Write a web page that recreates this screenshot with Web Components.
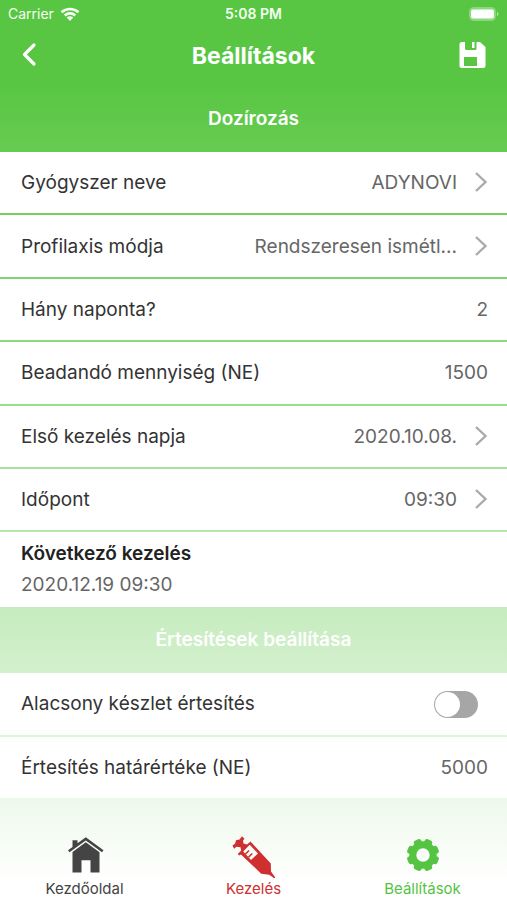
<!DOCTYPE html>
<html lang="hu">
<head>
<meta charset="utf-8">
<meta name="viewport" content="width=device-width, initial-scale=1">
<title>Beállítások</title>
<style>
body {
  margin: 0;
  font-family: Inter, "Noto Sans", sans-serif;
  font-size: 19px;
  line-height: 24px;
  color: #333;
}
</style>
</head>
<body>
<settings-screen></settings-screen>

<template id="status-bar">
  <style>
    :host { display: grid; grid-template-columns: 1fr auto 1fr; align-items: center; height: 28px; padding: 0 8px; color: #f4fff2; font-size: 14px; line-height: 20px; }
    .carrier { display: flex; align-items: center; gap: 6px; }
    .time { font-weight: 600; }
    .battery { justify-self: end; }
    svg { display: block; }
  </style>
  <span class="carrier">Carrier
    <svg width="20" height="14" viewBox="0 0 20 14" fill="none" stroke="currentColor" stroke-width="2.6">
      <path d="M1.5 5.3C6.2.8 13.8.8 18.5 5.3M4.700 8.500C7.700 5.700 12.300 5.700 15.300 8.500"/>
      <path d="M6.700 10.600Q10 7.700 13.300 10.600L10 14Z" fill="currentColor" stroke="none"/>
    </svg>
  </span>
  <span class="time">5:08 PM</span>
  <svg class="battery" width="30" height="14" viewBox="0 0 30 14">
    <rect x=".5" y=".5" width="26" height="13" rx="4" fill="#8bd97c" stroke="#8bd97c"/>
    <rect x="2" y="2.500" width="23" height="9" rx="2" fill="#fff"/>
    <path d="M28 4.500q3 2.500 0 5z" fill="#a8e49c"/>
  </svg>
</template>

<template id="title-bar">
  <style>
    :host { display: grid; grid-template-columns: 1fr auto 1fr; align-items: center; height: 56px; padding: 0 16px 2px; color: #fff; }
    h1 { margin: 0; font-size: 23px; line-height: 28px; font-weight: 700; }
    button { display: flex; padding: 4px; border: 0; background: none; color: inherit; cursor: pointer; }
    .save { justify-self: end; }
  </style>
  <button class="back" aria-label="Vissza">
    <svg width="20" height="28" viewBox="0 0 20 28" fill="none" stroke="currentColor" stroke-width="3.200" stroke-linecap="round" stroke-linejoin="round"><path d="M14 3 4.500 12.500 14 22"/></svg>
  </button>
  <h1><slot></slot></h1>
  <button class="save" aria-label="Mentés">
    <svg width="28" height="28" viewBox="0 0 28 28" fill="currentColor" fill-rule="evenodd"><path d="M3 0H6V6.500Q6 8 7.500 8H16Q17.500 8 17.500 6.500V0H21L26.500 5V24Q26.500 26 24.500 26H2.500Q.5 26 .5 24V2Q.5 0 3 0ZM5 15V24H18V15Z"/><path d="M13 0H15.500V6H13Z"/></svg>
  </button>
</template>

<template id="section-heading">
  <style>
    :host { display: flex; flex: none; align-items: center; justify-content: center; height: 66px; color: #fff; }
    h2 { margin: 0; font-size: 19px; line-height: 24px; font-weight: 600; }
  </style>
  <h2><slot></slot></h2>
</template>

<template id="setting-row">
  <style>
    :host { display: flex; flex: 1 0 48px; background: #fff; }
    .row { display: flex; flex: 1; align-items: center; gap: 16px; min-width: 0; margin: 0; padding: 1px 19px 0 21px; border: 0; background: none; font: inherit; color: inherit; text-align: left; }
    button.row { cursor: pointer; padding-right: 17px; }
    .name { flex: none; white-space: nowrap; }
    .value { flex: 1; min-width: 0; text-align: right; color: #666; }
    button .value { overflow: hidden; white-space: nowrap; }
    input.value { padding: 0; border: 0; outline: 0; background: none; font: inherit; }
    svg { flex: none; display: block; }
    .switch { appearance: none; box-sizing: border-box; width: 44px; height: 27px; margin: 0 10px 0 auto; padding: 1px; border-radius: 14px; background: #a6a6a6; cursor: pointer; }
    .switch::before { content: ""; display: block; width: 25px; height: 25px; border-radius: 50%; background: #fff; }
    .switch:checked { background: #58c642; }
    .switch:checked::before { margin-left: auto; }
  </style>
</template>

<template id="next-treatment">
  <style>
    :host { display: flex; flex: none; flex-direction: column; justify-content: center; gap: 7px; height: 75px; background: #fff; }
    h3, p { margin: 0; padding: 0 21px; font-size: 19px; line-height: 24px; }
    h3 { font-weight: 600; color: #222; }
    p { color: #666; }
  </style>
  <h3><slot name="title"></slot></h3>
  <p><slot></slot></p>
</template>

<template id="tab-item">
  <style>
    :host { display: block; flex: 1; }
    a { display: flex; flex-direction: column; align-items: center; gap: 1px; color: inherit; text-decoration: none; font-size: 15px; line-height: 20px; }
    ::slotted(svg) { display: block; width: 44px; height: 44px; }
  </style>
  <a href="#"><slot name="icon"></slot><span><slot></slot></span></a>
</template>

<template id="tab-bar">
  <style>
    :host { display: block; flex: none; }
    nav { display: flex; box-sizing: border-box; height: 102px; padding-top: 36px; }
    .home { color: #444; }
    .treat { color: #d02f2f; }
    .settings { color: #55c443; }
  </style>
  <nav>
    <tab-item class="home">
      <svg slot="icon" viewBox="0 0 44 44" fill="currentColor"><path d="M9.500 6.300H14.500V9.300L22.800 3.300 40.500 16.300 39 18.200 22.800 6.400 6.500 18.200 5 16.300 9.500 13Z"/><path d="M22.800 8.300 36.500 18.300V38.500H27.500V26.300H18.500V38.500H9.500V18Z"/></svg>Kezdőoldal
    </tab-item>
    <tab-item class="treat">
      <svg slot="icon" viewBox="0 0 44 44" fill="currentColor" fill-rule="evenodd"><path d="M.5 11.500 3.200 9.500 4 6.200 7.500 5.500 10 2.300 12.500 4.700 11 6.500 11.500 9.500 15 10.500 18.500 7.500 38.800 29.500 39 37.500 43.300 43.500 42.300 44.300 37.200 40.800 29.200 39.700 9 20.500 7 21.500 5.800 20 9.200 16.500 8.500 13.200 4.500 12.800 2 14.700ZM11.200 17.500 19 26 26 19.500 17.700 10.800Z"/><path d="M13.500 20 17 16.500M16.500 23.200 20.300 19.500" fill="none" stroke="currentColor" stroke-width="1.600"/></svg>Kezelés
    </tab-item>
    <tab-item class="settings">
      <svg slot="icon" viewBox="0 0 44 44"><g id="gear" fill="currentColor"></g><circle cx="22" cy="21" r="10.200" fill="none" stroke="currentColor" stroke-width="7"/></svg>Beállítások
    </tab-item>
  </nav>
</template>

<template id="settings-screen">
  <style>
    :host { display: flex; flex-direction: column; min-height: 100vh; background: linear-gradient(#58c642 9%, #fff 98%); }
    header { flex: none; }
    main { display: flex; flex: 1; flex-direction: column; }
    section { display: flex; flex-direction: column; gap: 2px; }
    section.dosing { flex: 6 0 auto; }
    section.alerts { flex: 2 0 auto; }
  </style>
  <header>
    <status-bar></status-bar>
    <title-bar>Beállítások</title-bar>
  </header>
  <main>
    <section-heading>Dozírozás</section-heading>
    <section class="dosing">
      <setting-row type="link" label="Gyógyszer neve" value="ADYNOVI"></setting-row>
      <setting-row type="link" label="Profilaxis módja" value="Rendszeresen ismétl..."></setting-row>
      <setting-row type="number" label="Hány naponta?" value="2"></setting-row>
      <setting-row type="number" label="Beadandó mennyiség (NE)" value="1500"></setting-row>
      <setting-row type="link" label="Első kezelés napja" value="2020.10.08."></setting-row>
      <setting-row type="link" label="Időpont" value="09:30"></setting-row>
      <next-treatment><span slot="title">Következő kezelés</span>2020.12.19 09:30</next-treatment>
    </section>
    <section-heading>Értesítések beállítása</section-heading>
    <section class="alerts">
      <setting-row type="switch" label="Alacsony készlet értesítés"></setting-row>
      <setting-row type="number" label="Értesítés határértéke (NE)" value="5000"></setting-row>
    </section>
  </main>
  <tab-bar></tab-bar>
</template>

<script>
class TemplateElement extends HTMLElement {
  constructor() {
    super();
    const template = document.getElementById(this.localName);
    this.attachShadow({ mode: "open" }).append(template.content.cloneNode(true));
  }
}

class SettingRow extends TemplateElement {
  connectedCallback() {
    if (this.shadowRoot.querySelector(".row")) return;
    const type = this.getAttribute("type");
    const row = document.createElement(type === "link" ? "button" : "div");
    row.className = "row";
    const name = document.createElement(type === "link" ? "span" : "label");
    name.className = "name";
    name.textContent = this.getAttribute("label");
    row.append(name);
    if (type === "link") {
      const value = document.createElement("span");
      value.className = "value";
      value.textContent = this.getAttribute("value");
      row.append(value);
      row.insertAdjacentHTML("beforeend", '<svg width="17" height="24" viewBox="0 0 17 24" fill="none" stroke="#aaa" stroke-width="2.4"><path d="M3 2 12.500 11 3 20"/></svg>');
    } else {
      name.htmlFor = "field";
      const input = document.createElement("input");
      input.id = "field";
      if (type === "switch") {
        input.type = "checkbox";
        input.className = "switch";
      } else {
        input.type = "text";
        input.inputMode = "numeric";
        input.className = "value";
        input.value = this.getAttribute("value");
      }
      row.append(input);
    }
    this.shadowRoot.append(row);
  }
}

class TabBar extends TemplateElement {
  connectedCallback() {
    // Eight teeth around the gear's ring
    const gear = this.shadowRoot.getElementById("gear");
    gear.innerHTML = Array.from({ length: 8 }, (_, i) =>
      `<rect x="18" y="4.700" width="8" height="8" rx="2.500" transform="rotate(${i * 45 + 22.5} 22 21)"/>`).join("");
  }
}

for (const name of ["status-bar", "title-bar", "section-heading", "next-treatment", "tab-item"]) {
  customElements.define(name, class extends TemplateElement {});
}
customElements.define("setting-row", SettingRow);
customElements.define("tab-bar", TabBar);
customElements.define("settings-screen", class extends TemplateElement {});
</script>
</body>
</html>
